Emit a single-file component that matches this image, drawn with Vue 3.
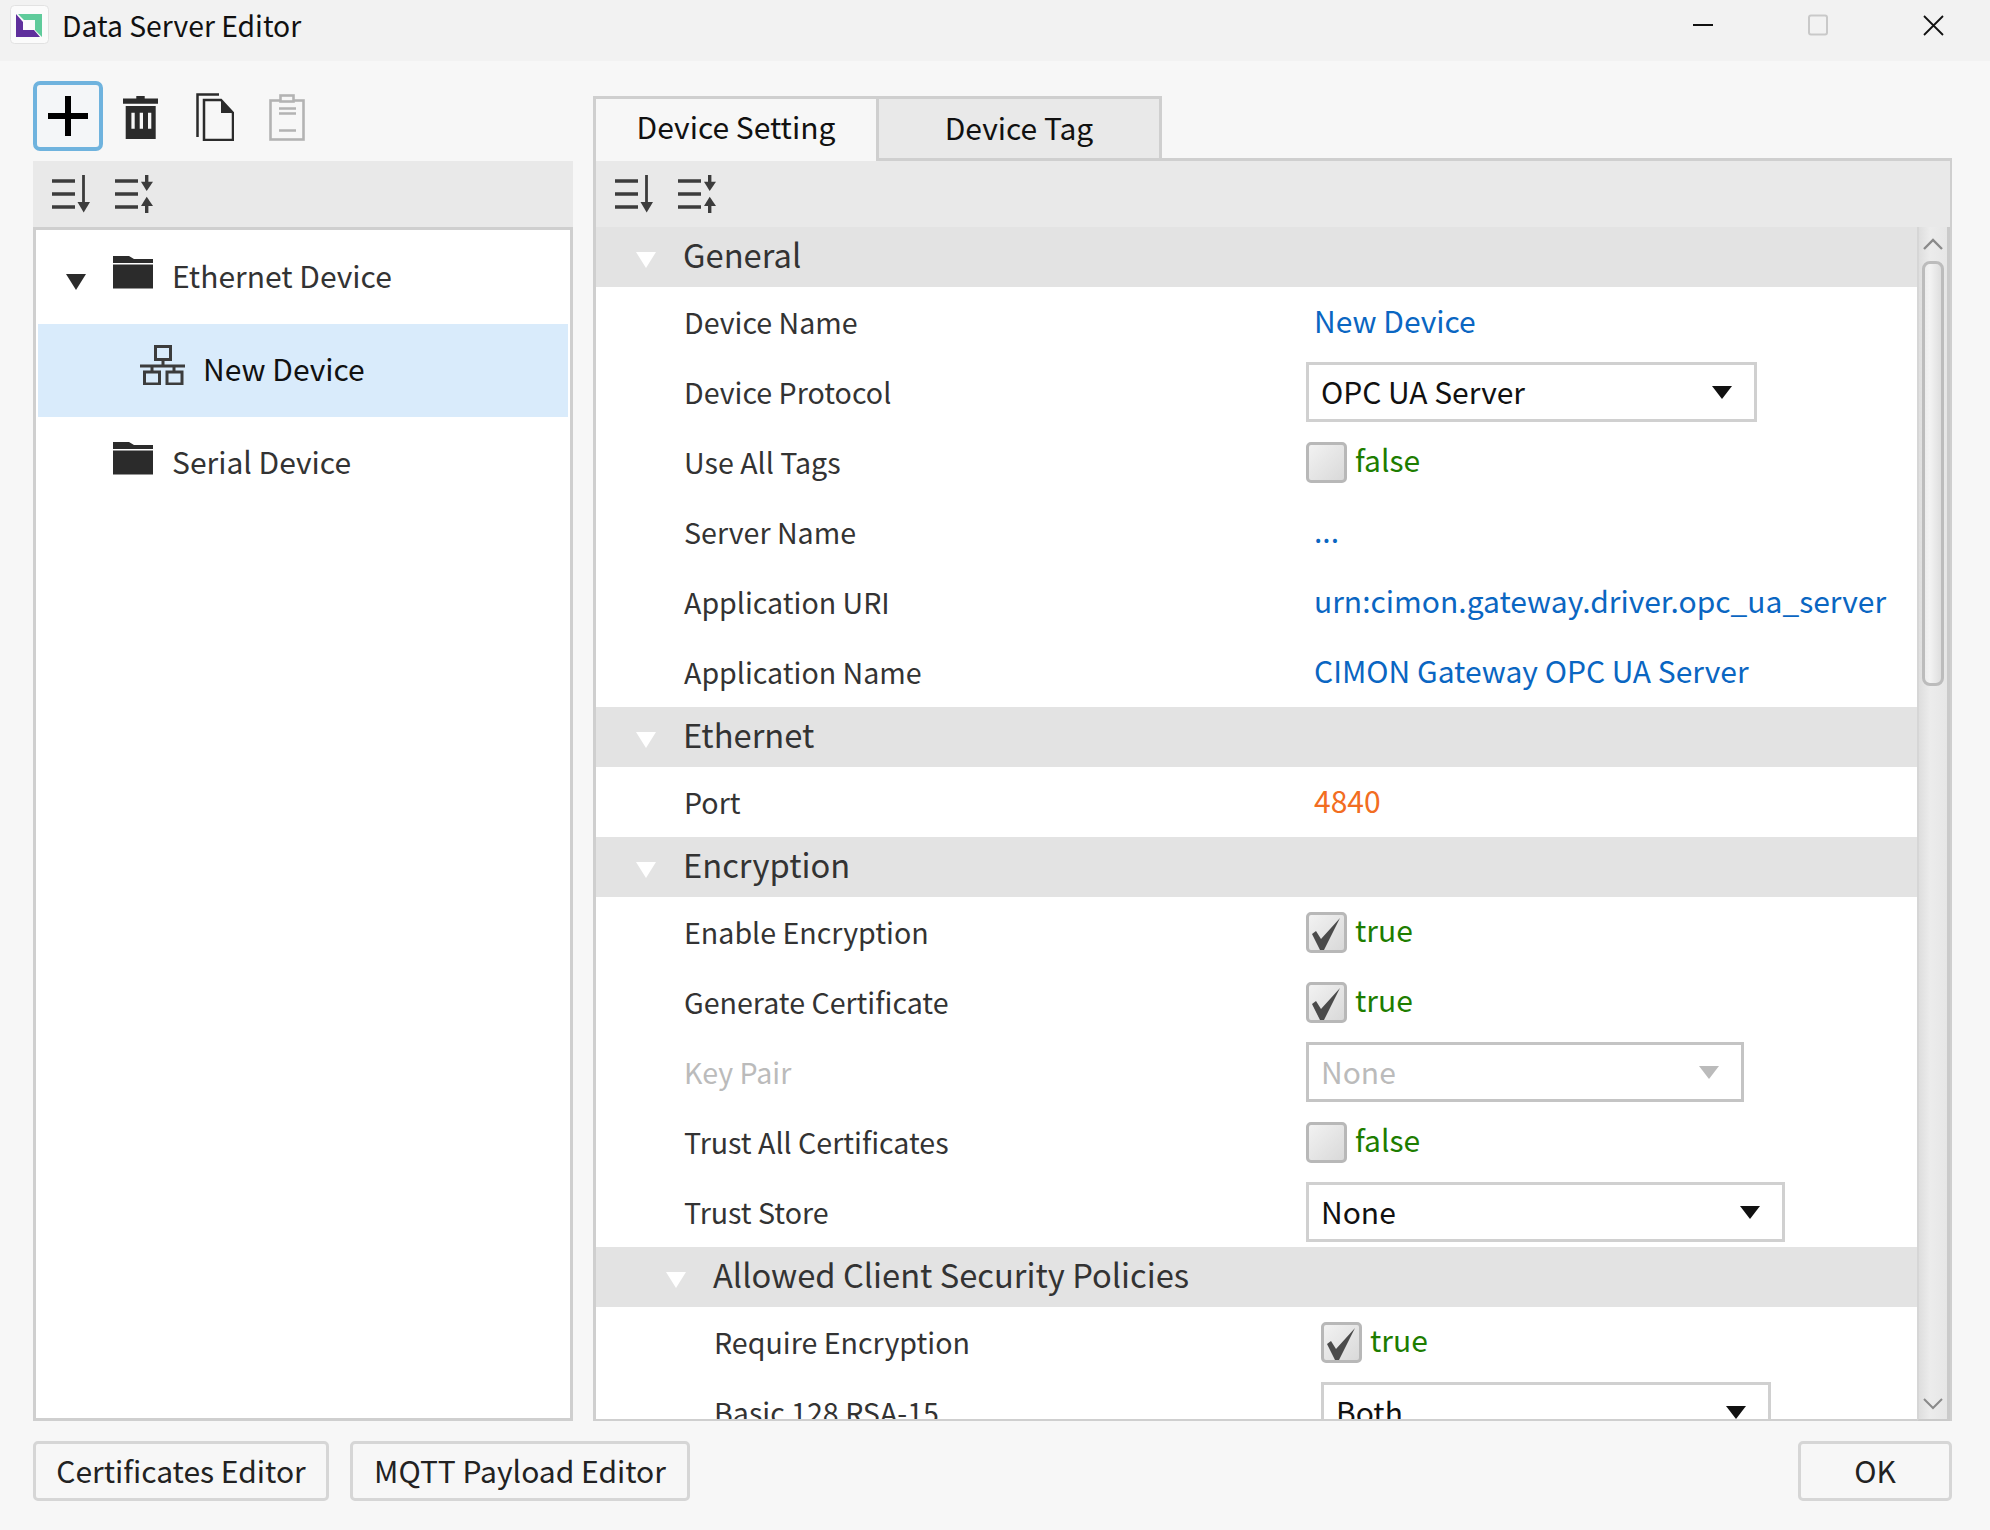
<script setup>
const sections = [
  { title: 'General', rows: [
    { label: 'Device Name', type: 'text', value: 'New Device' },
    { label: 'Device Protocol', type: 'combo', value: 'OPC UA Server', width: 451 },
    { label: 'Use All Tags', type: 'check', value: false },
    { label: 'Server Name', type: 'text', value: '...' },
    { label: 'Application URI', type: 'text', value: 'urn:cimon.gateway.driver.opc_ua_server' },
    { label: 'Application Name', type: 'text', value: 'CIMON Gateway OPC UA Server' },
  ]},
  { title: 'Ethernet', rows: [
    { label: 'Port', type: 'number', value: '4840' },
  ]},
  { title: 'Encryption', rows: [
    { label: 'Enable Encryption', type: 'check', value: true },
    { label: 'Generate Certificate', type: 'check', value: true },
    { label: 'Key Pair', type: 'combo', value: 'None', width: 438, disabled: true },
    { label: 'Trust All Certificates', type: 'check', value: false },
    { label: 'Trust Store', type: 'combo', value: 'None', width: 479 },
  ]},
  { title: 'Allowed Client Security Policies', nested: true, rows: [
    { label: 'Require Encryption', type: 'check', value: true },
    { label: 'Basic 128 RSA-15', type: 'combo', value: 'Both', width: 450 },
  ]},
]
</script>

<template>
  <div class="window">
    <header class="titlebar">
      <svg class="logo" width="50" height="50" viewBox="0 0 50 50">
        <rect x="5.5" y="5.5" width="38" height="38" rx="4" fill="#fbfbfb" stroke="#e2e2e2" />
        <polygon points="13,14 37,14 37,37 30,30 30,20 19,20" fill="#5fcb9b" />
        <polygon points="11,14 18,22 18,30 29,30 35,37 11,37" fill="#5f2f9c" />
      </svg>
      <span class="title">Data Server Editor</span>
      <div class="winctrls">
        <svg width="20" height="20" viewBox="0 0 20 20"><rect x="0" y="9" width="20" height="2" fill="#111" /></svg>
        <svg width="20" height="22" viewBox="0 0 20 22"><rect x="1" y="1.5" width="18" height="19" rx="2" fill="none" stroke="#c9c9c9" stroke-width="2" /></svg>
        <svg width="21" height="21" viewBox="0 0 21 21"><path d="M1 1L20 20M20 1L1 20" stroke="#111" stroke-width="1.8" fill="none" /></svg>
      </div>
    </header>

    <main class="body">
      <section class="left">
        <div class="tools">
          <button class="addbtn">
            <svg width="40" height="40" viewBox="0 0 40 40"><path d="M17 0h6v17h17v6H23v17h-6V23H0v-6h17z" fill="#000" /></svg>
          </button>
          <svg class="trash" width="36" height="43" viewBox="0 0 36 43">
            <path d="M13.3 0h8.4v2.6H35v5.1H0V2.6h13.3z" fill="#2b2b2b" />
            <path fill-rule="evenodd" d="M2.7 10h30v33h-30zM8.4 16.7v16h3.3v-16zM16.7 16.7v16H20v-16zM25 16.7v16h3.3v-16z" fill="#2b2b2b" />
          </svg>
          <svg class="copy" width="38" height="48" viewBox="0 0 38 48">
            <path d="M1.5 44V1.5H23" fill="none" stroke="#2b2b2b" stroke-width="2.5" />
            <path d="M8 7H25L37 20V47H8Z" fill="none" stroke="#2b2b2b" stroke-width="2.5" />
            <polygon points="25,7 37,20 25,20" fill="#2b2b2b" />
          </svg>
          <svg class="clip" width="36" height="47" viewBox="0 0 36 47">
            <rect x="1.5" y="6.5" width="33" height="39" fill="none" stroke="#b3b3b3" stroke-width="2.6" />
            <rect x="11.5" y="1.5" width="13" height="6" fill="#f7f7f7" stroke="#b3b3b3" stroke-width="2.6" />
            <path d="M10 14.5H27M10 19.5H27M10 36.5H27" stroke="#b3b3b3" stroke-width="2.4" />
          </svg>
        </div>
        <div class="panel-left">
          <div class="sortbar">
            <svg width="38" height="38" viewBox="0 0 38 38"><path d="M0 6h23M0 19h23M0 32h23" stroke="#3c3c3c" stroke-width="3.6" /><path d="M31.5 0v29" stroke="#3c3c3c" stroke-width="2.8" /><polygon points="25.5,27 38,27 31.7,37.5" fill="#3c3c3c" /></svg>
            <svg width="38" height="38" viewBox="0 0 38 38"><path d="M0 6h23M0 19h23M0 32h23" stroke="#3c3c3c" stroke-width="3.6" /><path d="M31.7 0v8M31.7 30v8" stroke="#3c3c3c" stroke-width="3.4" /><polygon points="26,6.7 38,6.7 31.7,16" fill="#3c3c3c" /><polygon points="26,31 38,31 31.7,21.7" fill="#3c3c3c" /></svg>
          </div>
          <div class="tree">
            <div class="node">
              <span class="expander"></span>
              <svg class="folder" width="40" height="33" viewBox="0 0 40 33"><path d="M0 0H16L21 3H40V7H0Z" fill="#2b2b2b" /><rect y="8.5" width="40" height="24" fill="#2b2b2b" /></svg>
              <span class="node-text">Ethernet Device</span>
            </div>
            <div class="node selected">
              <svg class="net" width="46" height="40" viewBox="0 0 46 40" fill="none" stroke="#3c3c3c" stroke-width="3">
                <rect x="15.5" y="1.5" width="15" height="13" />
                <path d="M0 21H45M23 14V21M12 21V27M34 21V27" />
                <rect x="4.5" y="27" width="15" height="12" />
                <rect x="27" y="27" width="15" height="12" />
              </svg>
              <span class="node-text dark">New Device</span>
            </div>
            <div class="node">
              <span class="expander none"></span>
              <svg class="folder" width="40" height="33" viewBox="0 0 40 33"><path d="M0 0H16L21 3H40V7H0Z" fill="#2b2b2b" /><rect y="8.5" width="40" height="24" fill="#2b2b2b" /></svg>
              <span class="node-text">Serial Device</span>
            </div>
          </div>
        </div>
      </section>

      <section class="right">
        <div class="tabs">
          <div class="tab active">Device Setting</div>
          <div class="tab">Device Tag</div>
        </div>
        <div class="panel-right">
          <div class="sortbar sortbar-right">
            <svg width="38" height="38" viewBox="0 0 38 38"><path d="M0 6h23M0 19h23M0 32h23" stroke="#3c3c3c" stroke-width="3.6" /><path d="M31.5 0v29" stroke="#3c3c3c" stroke-width="2.8" /><polygon points="25.5,27 38,27 31.7,37.5" fill="#3c3c3c" /></svg>
            <svg width="38" height="38" viewBox="0 0 38 38"><path d="M0 6h23M0 19h23M0 32h23" stroke="#3c3c3c" stroke-width="3.6" /><path d="M31.7 0v8M31.7 30v8" stroke="#3c3c3c" stroke-width="3.4" /><polygon points="26,6.7 38,6.7 31.7,16" fill="#3c3c3c" /><polygon points="26,31 38,31 31.7,21.7" fill="#3c3c3c" /></svg>
          </div>
          <div class="grid-wrap">
            <div class="props">
              <template v-for="s in sections" :key="s.title">
                <div class="sec-head" :class="{ nested: s.nested }">
                  <span class="sec-arrow"></span>
                  <span class="sec-title">{{ s.title }}</span>
                </div>
                <div v-for="r in s.rows" :key="r.label" class="row" :class="{ nested: s.nested }">
                  <span class="label" :class="{ off: r.disabled }">{{ r.label }}</span>
                  <div class="val">
                    <span v-if="r.type === 'text'" class="v-text">{{ r.value }}</span>
                    <span v-else-if="r.type === 'number'" class="v-num">{{ r.value }}</span>
                    <div v-else-if="r.type === 'check'" class="v-check">
                      <span class="box">
                        <svg v-if="r.value" width="35" height="35" viewBox="0 0 35 35"><polygon points="3,19 7,16 12,24 31,3 15,35 11,35" fill="#4b4b4b" /></svg>
                      </span>
                      <span class="check-text">{{ r.value }}</span>
                    </div>
                    <div v-else class="combo" :class="{ off: r.disabled }" :style="{ width: r.width + 'px' }">
                      <span class="combo-text">{{ r.value }}</span>
                      <span class="combo-arrow"></span>
                    </div>
                  </div>
                </div>
              </template>
            </div>
            <div class="scrollbar">
              <div class="sb-btn">
                <svg width="20" height="12" viewBox="0 0 20 12"><path d="M1 11L10 2L19 11" fill="none" stroke="#8a8a8a" stroke-width="2.4" /></svg>
              </div>
              <div class="thumb"></div>
              <div class="sb-btn down">
                <svg width="20" height="12" viewBox="0 0 20 12"><path d="M1 1L10 10L19 1" fill="none" stroke="#8a8a8a" stroke-width="2" /></svg>
              </div>
            </div>
          </div>
        </div>
      </section>
    </main>

    <footer class="footer">
      <button class="btn btn-cert">Certificates Editor</button>
      <button class="btn btn-mqtt">MQTT Payload Editor</button>
      <button class="btn btn-ok">OK</button>
    </footer>
  </div>
</template>

<style>
html, body { margin: 0; background: #f7f7f7; }
</style>

<style scoped>
.window {
  width: 1990px;
  height: 1530px;
  background: #f7f7f7;
  display: flex;
  flex-direction: column;
  font-family: "Noto Sans CJK KR", "Noto Sans", sans-serif;
  font-size: 30px;
  color: #333;
  overflow: hidden;
}
.titlebar {
  height: 61px;
  flex: none;
  background: #f2f2f2;
  display: flex;
  align-items: center;
  padding-left: 5px;
  box-sizing: border-box;
}
.logo { margin-top: -11px; }
.title { margin-left: 7px; font-size: 28.3px; color: #111; margin-top: -12px; }
.winctrls {
  margin-left: auto;
  margin-top: -11px;
  display: flex;
  align-items: center;
  padding-right: 46px;
  gap: 95px;
}
.body {
  flex: 1;
  min-height: 0;
  display: flex;
  gap: 20px;
  padding: 0 38px 0 33px;
}
.left {
  width: 540px;
  flex: none;
  display: flex;
  flex-direction: column;
}
.tools {
  height: 100px;
  flex: none;
  display: flex;
  align-items: center;
  box-sizing: border-box;
  padding-top: 10px;
}
.addbtn {
  width: 70px;
  height: 70px;
  padding: 0;
  box-sizing: border-box;
  border: 4px solid #6fb3de;
  border-radius: 7px;
  background: #f4f6f8;
  display: flex;
  align-items: center;
  justify-content: center;
}
.trash { margin-left: 20px; margin-top: 3px; }
.copy { margin-left: 37px; margin-top: 2px; }
.clip { margin-left: 35px; margin-top: 2px; }
.panel-left { flex: 1; min-height: 0; display: flex; flex-direction: column; }
.sortbar {
  height: 66px;
  flex: none;
  background: #e9e9e9;
  display: flex;
  align-items: center;
  gap: 25px;
  padding-left: 19px;
  box-sizing: border-box;
}
.tree {
  flex: 1;
  min-height: 0;
  background: #fff;
  border: 3px solid #cfcfcf;
  padding: 1px 2px;
  box-sizing: border-box;
}
.node {
  height: 93px;
  display: flex;
  align-items: center;
  position: relative;
}
.node.selected { background: #d9ebfb; margin: 0; }
.expander {
  width: 0;
  height: 0;
  margin-left: 28px;
  border-left: 10px solid transparent;
  border-right: 10px solid transparent;
  border-top: 16px solid #2b2b2b;
  margin-top: 8px;
}
.expander.none { border-top-color: transparent; }
.folder { margin-left: 27px; margin-top: -11px; }
.net { margin-left: 102px; margin-top: -12px; }
.node-text { margin-left: 19px; color: #333; margin-top: -5px; }
.node-text.dark { margin-left: 17px; color: #111; }
.right {
  flex: 1;
  min-width: 0;
  display: flex;
  flex-direction: column;
}
.tabs {
  margin-top: 35px;
  height: 65px;
  flex: none;
  display: flex;
  box-sizing: border-box;
  border-bottom: 3px solid #cfcfcf;
}
.tab {
  width: 286px;
  height: 65px;
  flex: none;
  box-sizing: border-box;
  border: 3px solid #cfcfcf;
  background: #e9e9e9;
  display: flex;
  align-items: center;
  justify-content: center;
  color: #111;
  padding-bottom: 3px;
}
.tab.active {
  width: 283px;
  background: #f7f7f7;
  border-bottom: none;
  border-right: none;
  padding-bottom: 8px;
}
.panel-right {
  flex: 1;
  min-height: 0;
  display: flex;
  flex-direction: column;
  border: solid #cfcfcf;
  border-width: 0 2px 0 3px;
}
.sortbar-right { padding-left: 19px; }
.grid-wrap {
  flex: 1;
  min-height: 0;
  display: flex;
}
.props {
  flex: 1;
  min-width: 0;
  background: #fff;
  overflow: hidden;
  border-bottom: 2px solid #cfcfcf;
}
.sec-head {
  height: 60px;
  background: #e3e3e3;
  display: flex;
  align-items: center;
  padding-left: 40px;
}
.sec-head.nested { padding-left: 70px; }
.sec-arrow {
  width: 0;
  height: 0;
  border-left: 10px solid transparent;
  border-right: 10px solid transparent;
  border-top: 16px solid #fff;
  margin-top: 6px;
}
.sec-title { margin-left: 27px; font-size: 32.7px; color: #333; margin-top: -7px; }
.row {
  height: 70px;
  display: flex;
  align-items: center;
  padding-left: 88px;
  box-sizing: border-box;
}
.row.nested { padding-left: 118px; }
.label { width: 622px; flex: none; color: #333; font-size: 28.6px; margin-top: -2px; }
.row.nested .label { width: 607px; }
.label.off { color: #bbb; }
.val { display: flex; align-items: center; min-width: 0; white-space: nowrap; }
.v-text { padding-left: 8px; color: #0a66c2; margin-top: -5px; }
.v-num { padding-left: 8px; color: #f26d21; margin-top: -5px; }
.v-check { display: flex; align-items: center; gap: 8px; }
.box {
  width: 41px;
  height: 41px;
  box-sizing: border-box;
  border: 3px solid #b8b8b8;
  border-radius: 5px;
  background: linear-gradient(135deg, #f2f2f2, #d9d9d9);
  display: flex;
}
.check-text { color: #1d7d00; margin-top: -7px; }
.combo {
  height: 60px;
  box-sizing: border-box;
  border: 3px solid #d0d0d0;
  background: #fff;
  display: flex;
  align-items: center;
  justify-content: space-between;
  padding: 0 22px 0 12px;
  color: #111;
}
.combo-text { margin-top: -2px; }
.combo.off { color: #bbb; border-color: #c4c4c4; }
.combo-arrow {
  width: 0;
  height: 0;
  border-left: 10px solid transparent;
  border-right: 10px solid transparent;
  border-top: 13px solid #111;
}
.combo.off .combo-arrow { border-top-color: #bbb; }
.scrollbar {
  width: 33px;
  flex: none;
  box-sizing: border-box;
  background: linear-gradient(90deg, #dedede, #ececec 40%, #e6e6e6);
  border-left: 2px solid #d6d6d6;
  border-right: 3px solid #cacaca;
  border-bottom: 2px solid #cacaca;
  display: flex;
  flex-direction: column;
  align-items: center;
}
.sb-btn {
  height: 34px;
  flex: none;
  width: 100%;
  display: flex;
  align-items: center;
  justify-content: center;
}
.sb-btn.down { margin-top: auto; height: 21px; align-items: flex-start; }
.thumb {
  width: 22px;
  height: 425px;
  flex: none;
  box-sizing: border-box;
  border: 3px solid #bcbcbc;
  border-radius: 8px;
  background: linear-gradient(90deg, #ededed, #f3f3f3 30%, #dedede);
}
.footer {
  height: 109px;
  flex: none;
  display: flex;
  padding: 20px 38px 29px 33px;
  box-sizing: border-box;
  gap: 21px;
}
.btn {
  height: 60px;
  box-sizing: border-box;
  border: 3px solid #d6d6d6;
  border-radius: 5px;
  background: #f7f7f7;
  font-family: inherit;
  font-size: 30px;
  color: #222;
  padding: 0 0 2px;
}
.btn-cert { width: 296px; }
.btn-mqtt { width: 340px; }
.btn-ok { width: 154px; margin-left: auto; }
</style>
